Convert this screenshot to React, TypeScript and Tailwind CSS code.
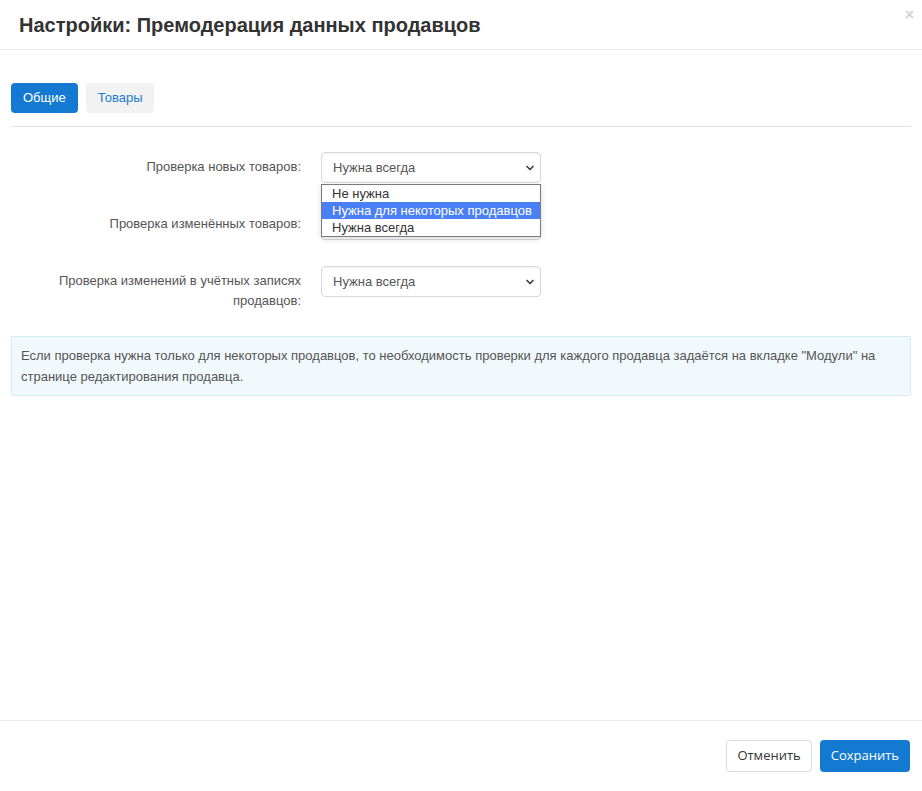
import { ChevronDown } from "lucide-react";

const options = ["Не нужна", "Нужна для некоторых продавцов", "Нужна всегда"];

const SelectBox = ({ value }: { value: string }) => (
  <div className="relative flex h-[31px] w-[220px] items-center rounded-[4px] border border-[#d6d9dd] bg-white pl-[11px] text-[13px] text-[#555] shadow-[inset_0_1px_2px_rgba(0,0,0,0.06)]">
    <span>{value}</span>
    <ChevronDown className="absolute right-[4px] top-[9px] h-[12px] w-[12px] text-[#444]" strokeWidth={3.5} />
  </div>
);

const Row = ({
  label,
  value,
  open,
}: {
  label: string;
  value: string;
  open?: boolean;
}) => (
  <div className="flex items-start gap-[20px]">
    <div className="w-[290px] pl-[40px] pt-[5px] text-right text-[13px] leading-[20px] text-[#555]">
      {label}
    </div>
    <div className="relative">
      <SelectBox value={value} />
      {open && (
        <div className="absolute left-0 top-[32px] z-10 w-[220px] border border-[#7a7a7a] bg-white text-[13px] leading-[17px] text-[#333] shadow-[0_2px_6px_rgba(0,0,0,0.15)]">
          {options.map((o, i) => (
            <div
              key={o}
              className={`pl-[10px] ${i === 1 ? "bg-[#4a7ff5] text-white" : ""}`}
            >
              {o}
            </div>
          ))}
        </div>
      )}
    </div>
  </div>
);

export default function App() {
  return (
    <div className="flex min-h-screen flex-col bg-white font-['Liberation_Sans',Arial,sans-serif]">
      <div className="relative flex h-[50px] items-center border-b border-[#e8eaed] pl-[19px]">
        <h1 className="text-[20px] font-bold text-[#333]">
          Настройки: Премодерация данных продавцов
        </h1>
        <span className="absolute right-[8px] top-[7px] text-[16px] font-bold leading-none text-[#d4d4d4]">
          ×
        </span>
      </div>

      <div className="flex-1 px-[11px]">
        <div className="mt-[33px] flex gap-[8px] border-b border-[#dfe4ea] pb-[13px]">
          <button className="h-[30px] rounded-[4px] bg-[#1479d1] px-[12px] text-[13px] text-white">
            Общие
          </button>
          <button className="h-[30px] rounded-[4px] bg-[#f2f2f2] px-[12px] text-[13px] text-[#1f7ad0]">
            Товары
          </button>
        </div>

        <div className="mt-[25px] flex flex-col gap-[26px]">
          <Row label="Проверка новых товаров:" value="Нужна всегда" open />
          <Row label="Проверка изменённых товаров:" value="" />
          <Row
            label="Проверка изменений в учётных записях продавцов:"
            value="Нужна всегда"
          />
        </div>

        <div className="mt-[25px] rounded-[2px] border border-[#d3ebf8] bg-[#f1f9fd] px-[9px] py-[8px] text-[13px] leading-[21px] text-[#555]">
          Если проверка нужна только для некоторых продавцов, то необходимость проверки для каждого продавца задаётся на вкладке "Модули" на
          странице редактирования продавца.
        </div>
      </div>

      <div className="flex h-[71px] items-center justify-end gap-[8px] border-t border-[#e8eaed] pr-[12px] font-['Open_Sans',sans-serif]">
        <button className="h-[32px] rounded-[4px] border border-[#d6d9dd] bg-white px-[10px] text-[13px] text-[#333]">
          Отменить
        </button>
        <button className="h-[32px] rounded-[4px] bg-[#1479d1] px-[11px] text-[13px] text-white">
          Сохранить
        </button>
      </div>
    </div>
  );
}
